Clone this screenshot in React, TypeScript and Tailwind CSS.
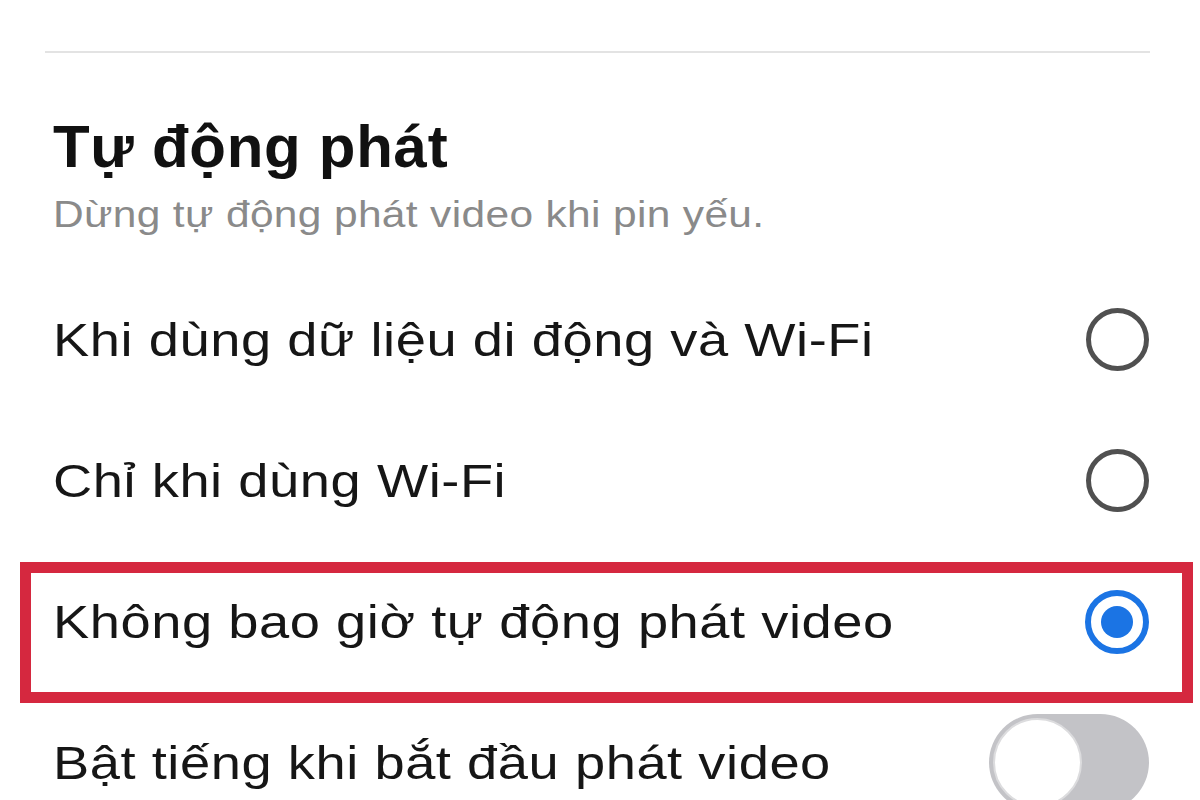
import React from "react";

function Radio({ selected }: { selected?: boolean }) {
  if (selected) {
    return (
      <div className="w-[64px] h-[64px] rounded-full border-[6px] border-[#1b74e4] flex items-center justify-center shrink-0">
        <div className="w-[32px] h-[32px] rounded-full bg-[#1b74e4]" />
      </div>
    );
  }
  return <div className="w-[63px] h-[63px] rounded-full border-[5px] border-[#505050] shrink-0" />;
}

function Toggle() {
  return (
    <div className="w-[160px] h-[97px] rounded-full bg-[#c3c3c7] p-[4px] shrink-0 flex items-center">
      <div className="w-[89px] h-[89px] rounded-full bg-white border-[2px] border-[#dcdcde]" />
    </div>
  );
}

function Row({ label, children }: { label: string; children: React.ReactNode }) {
  return (
    <div className="h-[141px] flex items-center justify-between pl-[53px] pr-[51px]">
      <span className="block origin-left scale-x-[1.18] text-[46px] leading-none tracking-[0.01em] text-[#161616]">
        {label}
      </span>
      {children}
    </div>
  );
}

export default function App() {
  return (
    <div
      className="relative w-[1200px] h-[800px] overflow-hidden bg-white"
      style={{ fontFamily: "'Liberation Sans', Arial, sans-serif" }}
    >
      <div className="pt-[51px] pl-[45px] pr-[50px]">
        <div className="h-[2px] bg-[#e3e3e3]" />
      </div>
      <div className="pl-[53px] pt-[64px]">
        <h1 className="text-[60px] leading-none font-bold tracking-[0.012em] text-[#111]">Tự động phát</h1>
        <p className="mt-[20px] origin-left scale-x-[1.18] text-[36px] leading-none tracking-[0.008em] text-[#8a8a8a]">
          Dừng tự động phát video khi pin yếu.
        </p>
      </div>
      <div className="mt-[36px]">
        <Row label="Khi dùng dữ liệu di động và Wi-Fi">
          <Radio />
        </Row>
        <Row label="Chỉ khi dùng Wi-Fi">
          <Radio />
        </Row>
        <Row label="Không bao giờ tự động phát video">
          <Radio selected />
        </Row>
        <Row label="Bật tiếng khi bắt đầu phát video">
          <Toggle />
        </Row>
      </div>
      <div className="absolute left-[20px] top-[562px] w-[1173px] h-[141px] border-[11px] border-[#d5283f] pointer-events-none" />
    </div>
  );
}
